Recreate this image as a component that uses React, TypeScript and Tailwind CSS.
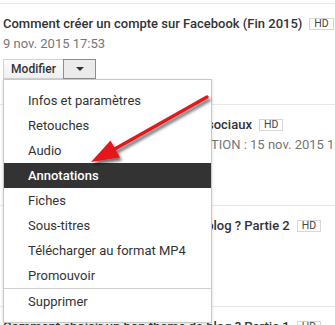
import React from 'react';

const menuItems = [
    'Infos et paramètres',
    'Retouches',
    'Audio',
    'Annotations',
    'Fiches',
    'Sous-titres',
    'Télécharger au format MP4',
    'Promouvoir',
];

const HdBadge = () => (
    <span className="ml-[7px] flex h-[12px] items-center border border-[#d6d6d6] px-[4px] text-[10.5px] leading-none text-[#444]">
        HD
    </span>
);

interface RowProps {
    title: string;
    date?: string;
    children?: React.ReactNode;
}

const VideoRow: React.FC<RowProps> = ({ title, date, children }) => (
    <div className="h-[101px] border-t border-[#e8e8e8] px-[3px] pt-[10px]">
        <div className="flex h-[20px] items-center whitespace-nowrap">
            <span className="text-[13px] font-medium text-[#333]">{title}</span>
            <HdBadge />
        </div>
        <div className="h-[20px] whitespace-nowrap text-[13px] leading-[20px] text-[#767676]">{date}</div>
        {children}
    </div>
);

const ActionMenu = () => (
    <div className="absolute left-0 top-[20px] z-10 w-[209px] border border-[#c8c8c8] bg-white py-[8px] shadow-[0_1px_3px_rgba(0,0,0,0.15)]">
        {menuItems.map((label) => {
            const active = label === 'Annotations';
            return (
                <div
                    key={label}
                    className={`flex h-[25px] items-center pl-[24px] text-[13px] whitespace-nowrap ${
                        active ? 'bg-[#333] font-medium text-white' : 'text-[#333]'
                    }`}
                >
                    {label}
                </div>
            );
        })}
        <div className="h-px bg-[#d0d0d0]" />
        <div className="flex h-[25px] items-center pl-[24px] text-[13px] text-[#333]">Supprimer</div>
    </div>
);

const RedArrow = () => (
    <svg className="pointer-events-none absolute left-0 top-0 z-20" width="335" height="325" viewBox="0 0 335 325">
        <defs>
            <filter id="arrowShadow" x="-20%" y="-20%" width="140%" height="160%">
                <feDropShadow dx="2" dy="3" stdDeviation="1.6" floodColor="#000" floodOpacity="0.55" />
            </filter>
        </defs>
        <g filter="url(#arrowShadow)">
            <line x1="207" y1="97" x2="113" y2="150" stroke="#e5191b" strokeWidth="3.5" strokeLinecap="round" />
            <polygon points="91,162 120,157.5 110.5,140.5" fill="#e5191b" />
        </g>
    </svg>
);

export default function App() {
    return (
        <div className="relative h-[325px] w-[335px] overflow-hidden bg-white pt-[3px] font-['Roboto','Liberation_Sans',sans-serif]">
            <VideoRow title="Comment créer un compte sur Facebook (Fin 2015)" date="9 nov. 2015 17:53">
                <div className="relative mt-[5px] flex h-[20px]">
                    <button className="flex h-[20px] w-[61px] items-center justify-center border border-[#d3d3d3] bg-gradient-to-b from-[#fcfcfc] to-[#f0f0f0] text-[12px] font-medium text-[#333]">
                        Modifier
                    </button>
                    <button className="-ml-px flex h-[20px] w-[33px] items-center justify-center border border-[#8e8e8e] bg-[#ebebeb]">
                        <span className="h-0 w-0 border-x-[4px] border-t-[4px] border-x-transparent border-t-[#333]" />
                    </button>
                    <ActionMenu />
                </div>
            </VideoRow>
            <VideoRow
                title="Partager une vidéo sur les réseaux sociaux"
                date="VIDÉO PROGRAMMÉE — PLANIFICATION : 15 nov. 2015 19:00"
            />
            <VideoRow title="Comment choisir un bon thème de blog ? Partie 2" />
            <VideoRow title="Comment choisir un bon thème de blog ? Partie 1" />
            <RedArrow />
        </div>
    );
}
